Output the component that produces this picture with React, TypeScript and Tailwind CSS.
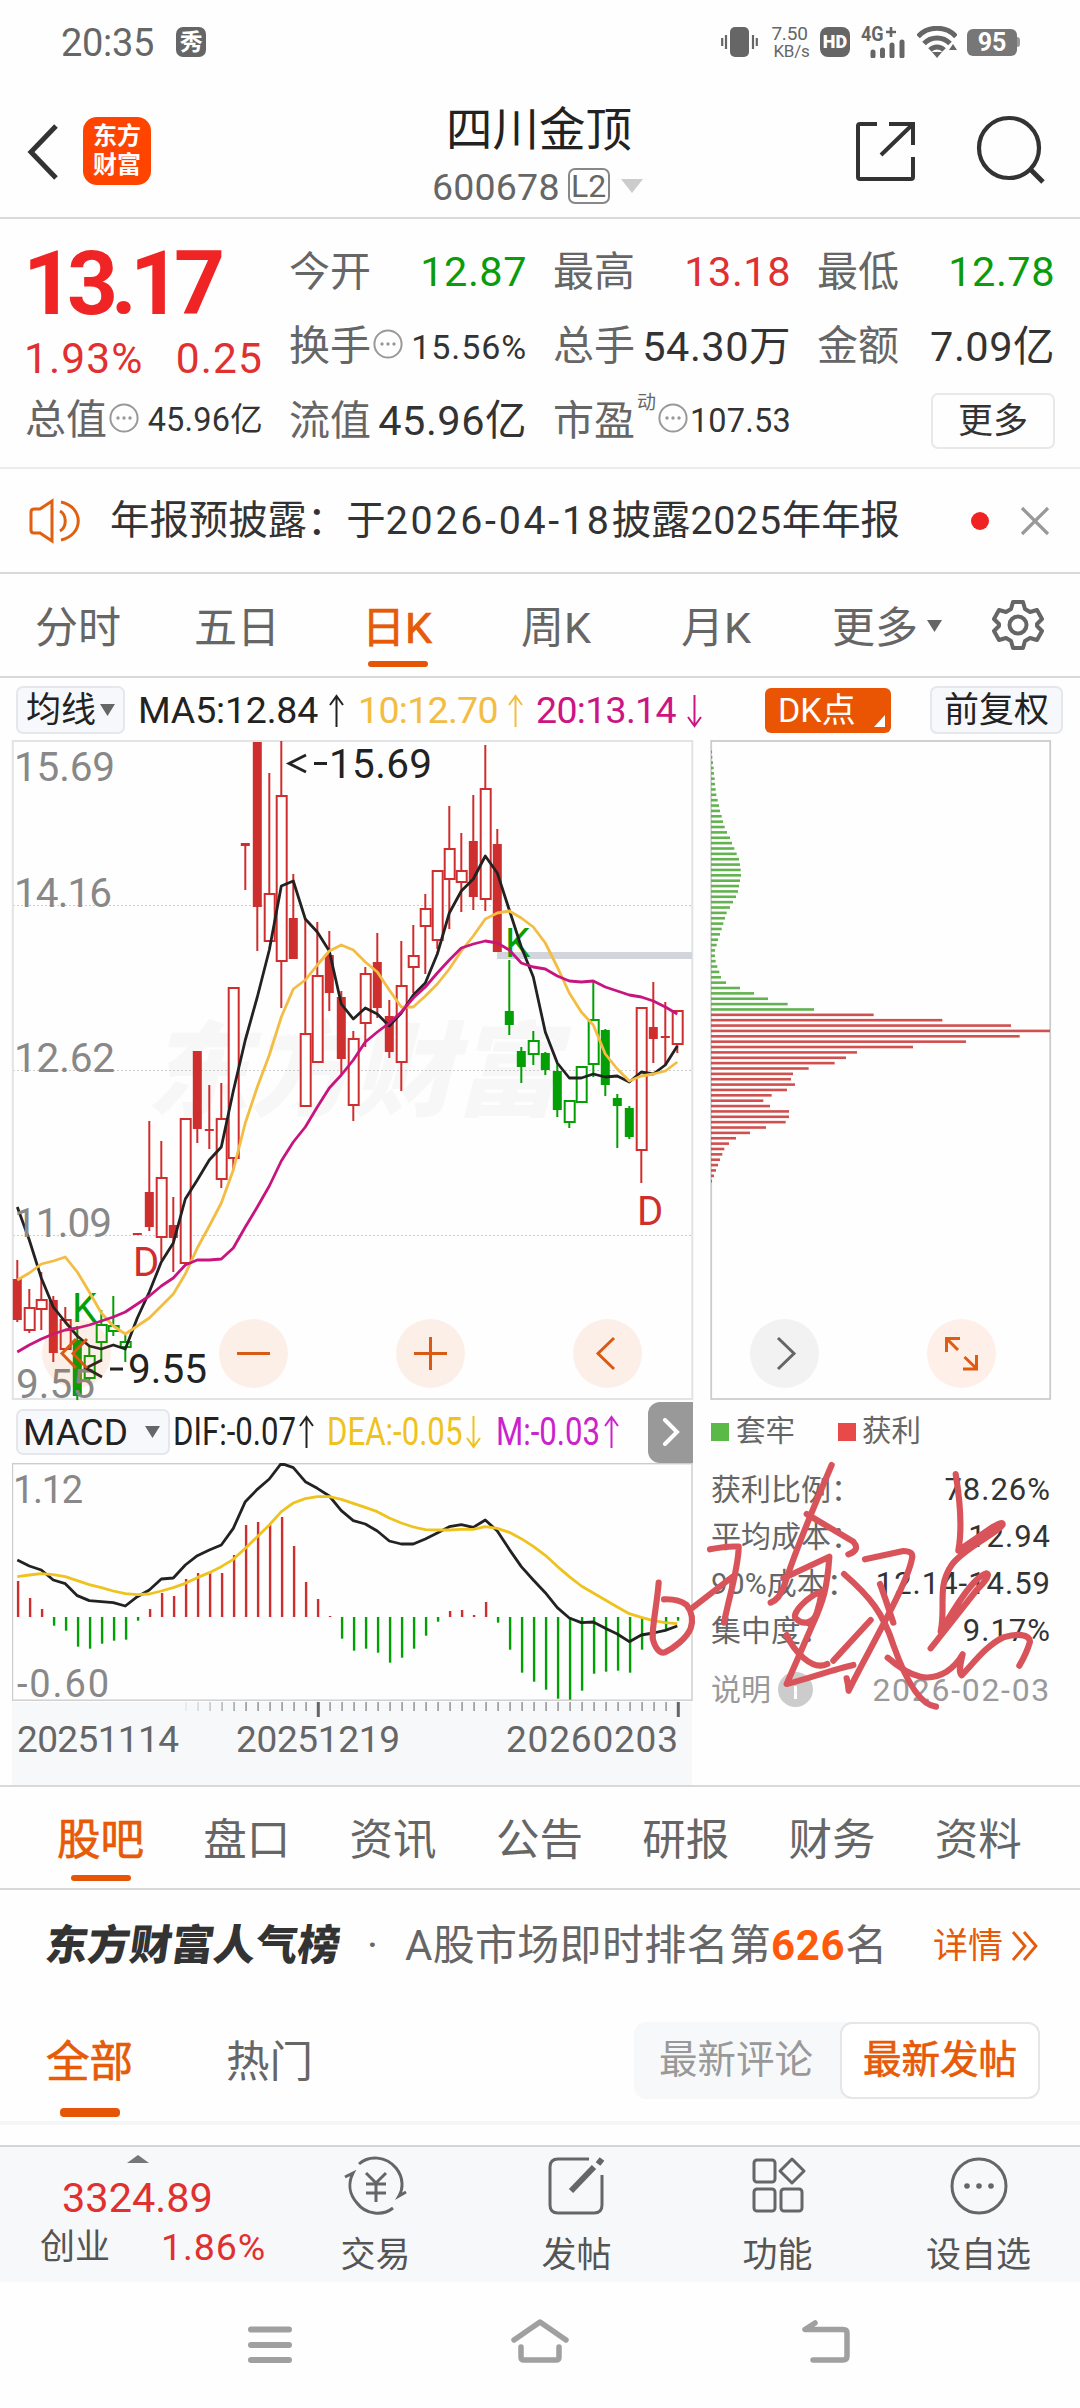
import React from "react";

type Kind = "R" | "r" | "G" | "g";
// [high, bodyTop, bodyBottom, low, kind]; upper case is a filled body, lower case a hollow one
type Candle = [number, number, number, number, Kind];

const RED = "#cf2e2e";
const GREEN = "#049f04";

const CANDLES: Candle[] = [
    [1260, 1279, 1320, 1322, "R"], [1289, 1308, 1330, 1333, "r"], [1272, 1300, 1309, 1330, "r"], [1296, 1300, 1353, 1362, "R"],
    [1307, 1320, 1349, 1351, "r"], [1326, 1340, 1396, 1400, "G"], [1347, 1356, 1378, 1380, "g"], [1310, 1325, 1342, 1360, "g"],
    [1296, 1326, 1331, 1336, "g"], [1335, 1342, 1347, 1362, "g"], [1233, 1233, 1235, 1235, "R"], [1121, 1192, 1227, 1231, "R"],
    [1141, 1178, 1237, 1260, "r"], [1197, 1225, 1238, 1272, "R"], [1119, 1119, 1263, 1263, "r"], [1051, 1051, 1129, 1143, "R"],
    [1085, 1129, 1131, 1149, "R"], [1083, 1119, 1179, 1188, "r"], [988, 988, 1158, 1170, "r"], [843, 843, 846, 890, "R"],
    [742, 742, 907, 951, "R"], [773, 894, 941, 941, "r"], [741, 796, 961, 1008, "r"], [874, 918, 959, 959, "R"],
    [918, 1034, 1106, 1106, "r"], [922, 976, 1062, 1062, "r"], [931, 955, 993, 1011, "R"], [991, 997, 1059, 1075, "R"],
    [1031, 1039, 1105, 1121, "r"], [967, 974, 1023, 1047, "r"], [933, 962, 1008, 1018, "R"], [1000, 1016, 1052, 1058, "R"],
    [941, 986, 1062, 1091, "r"], [925, 956, 967, 993, "r"], [894, 909, 926, 974, "r"], [871, 871, 940, 949, "r"],
    [806, 849, 879, 929, "r"], [833, 871, 882, 912, "r"], [795, 841, 897, 910, "R"], [745, 789, 899, 911, "r"],
    [829, 844, 952, 952, "R"], [960, 1011, 1025, 1035, "G"], [1047, 1051, 1067, 1083, "G"], [1031, 1041, 1054, 1065, "g"],
    [1052, 1053, 1070, 1075, "G"], [1063, 1071, 1110, 1117, "G"], [1101, 1101, 1122, 1128, "g"], [1067, 1067, 1102, 1102, "g"],
    [981, 1020, 1064, 1077, "g"], [1029, 1030, 1085, 1096, "G"], [1094, 1098, 1106, 1148, "G"], [1106, 1108, 1137, 1139, "G"],
    [1008, 1008, 1150, 1183, "r"], [982, 1027, 1039, 1063, "R"], [1002, 1036, 1038, 1065, "R"], [1011, 1011, 1044, 1053, "r"],
];

const MA5 = [1207, 1240, 1278, 1307, 1322, 1336, 1346, 1349, 1345, 1349, 1318, 1292, 1262, 1243, 1199, 1180, 1160, 1147, 1091, 1040, 997, 950, 886, 881, 919, 932, 951, 1004, 1019, 1008, 1014, 1026, 1013, 995, 983, 954, 913, 891, 879, 856, 873, 910, 947, 977, 1032, 1063, 1078, 1078, 1074, 1077, 1076, 1082, 1072, 1074, 1065, 1046];
const MA10 = [1280, 1273, 1264, 1261, 1257, 1272, 1292, 1313, 1326, 1334, 1326, 1318, 1306, 1294, 1274, 1248, 1226, 1203, 1170, 1123, 1087, 1055, 1017, 989, 980, 965, 951, 945, 950, 962, 972, 990, 1007, 1007, 996, 984, 969, 951, 936, 919, 913, 911, 918, 927, 943, 967, 993, 1012, 1025, 1054, 1069, 1081, 1076, 1074, 1071, 1062];
const MA20 = [1352, 1345, 1339, 1334, 1330, 1328, 1325, 1321, 1317, 1312, 1304, 1296, 1286, 1278, 1265, 1260, 1260, 1259, 1248, 1227, 1207, 1186, 1161, 1142, 1127, 1107, 1088, 1075, 1060, 1042, 1032, 1023, 1012, 998, 987, 973, 960, 948, 944, 941, 943, 950, 963, 967, 969, 976, 981, 982, 981, 987, 991, 995, 997, 1001, 1007, 1014];

const CHIPS = [3, 4, 6, 8, 9, 11, 12, 14, 16, 20, 24, 27, 32, 36, 41, 48, 57, 63, 70, 77, 84, 87, 89, 90, 87, 84, 81, 75, 66, 57, 47, 42, 37, 32, 27, 21, 17, 12, 12, 14, 19, 25, 30, 45, 87, 129, 171, 230, 309, 488, 694, 900, 1017, 926, 765, 606, 438, 405, 371, 293, 246, 240, 252, 228, 182, 157, 177, 234, 234, 224, 165, 117, 75, 54, 40, 34, 27, 21, 15, 9, 3];
const CHIPS_ABOVE = 49;

// MACD series are in thirds of a pixel below y = 1400
const BARS = [543, 594, 627, 677, 692, 740, 746, 731, 722, 719, 662, 627, 579, 588, 537, 519, 516, 519, 465, 375, 366, 375, 351, 438, 546, 597, 648, 716, 752, 746, 758, 788, 773, 746, 707, 665, 633, 630, 645, 606, 668, 749, 818, 845, 869, 896, 899, 872, 821, 815, 812, 818, 749, 718, 690, 662];
const DIF = [480, 498, 510, 540, 551, 587, 602, 605, 608, 618, 590, 570, 537, 534, 495, 467, 450, 435, 385, 305, 268, 237, 190, 203, 245, 265, 288, 332, 362, 372, 393, 423, 432, 432, 417, 399, 380, 374, 382, 360, 393, 448, 500, 540, 578, 623, 654, 668, 666, 685, 702, 725, 705, 699, 691, 678];
const DEA = [530, 525, 521, 524, 530, 542, 554, 563, 573, 581, 584, 582, 573, 563, 550, 533, 518, 500, 478, 445, 410, 375, 335, 309, 296, 290, 290, 298, 310, 322, 335, 354, 369, 381, 389, 390, 390, 388, 388, 380, 385, 397, 416, 439, 466, 499, 530, 558, 579, 600, 621, 641, 652, 662, 668, 671];

const px = (i: number) => 17.3 + i * 12;
const line = (ys: number[]) => ys.map((y, i) => `${px(i)},${y}`).join(" ");
const macdY = (v: number) => 1400 + v / 3;

const Dots: React.FC = () => (
    <svg width="30" height="30" viewBox="0 0 30 30" className="shrink-0 -mt-1.5">
        <circle cx="15" cy="15" r="13.6" fill="none" stroke="#999" strokeWidth="2" />
        {[9, 15, 21].map(x => <circle key={x} cx={x} cy="15" r="1.7" fill="#999" />)}
    </svg>
);

const Tri: React.FC<{ className?: string }> = ({ className = "" }) => (
    <svg width="15" height="12" viewBox="0 0 15 12" className={className}><path d="M0 0H15L7.5 12Z" fill="currentColor" /></svg>
);

const Arrow: React.FC<{ down?: boolean; className?: string }> = ({ down, className = "" }) => (
    <svg width="17" height="34" viewBox="0 0 17 34" className={`shrink-0 ${down ? "rotate-180" : ""} ${className}`}>
        <path d="M8.5 33V2M2 11L8.5 2L15 11" fill="none" stroke="currentColor" strokeWidth="2" />
    </svg>
);

const StatusBar: React.FC = () => (
    <div className="flex h-[84px] items-center pl-[61px] pr-[60px] text-[#666]">
        <span className="pt-[2px] text-[38px] tracking-[-0.3px]">20:35</span>
        <span className="ml-[22px] flex h-[30px] w-[30px] items-center justify-center rounded-[7px] bg-[#666] text-[23px] font-bold text-white">秀</span>
        <svg width="37" height="30" viewBox="0 0 37 30" className="ml-auto">
            <rect x="9" y="0" width="19" height="30" rx="5" fill="#666" />
            <path d="M1.2 11V19M5 8V22M32 8V22M35.8 11V19" stroke="#666" strokeWidth="2.2" />
        </svg>
        <div className="ml-[13px] w-[37px] text-center text-[19px] leading-[19px] tracking-[-0.2px]">
            <div>7.50</div>
            <div className="-mr-1 text-[17px] leading-[17px]">KB/s</div>
        </div>
        <span className="ml-[12px] flex h-[30px] w-[30px] items-center justify-center rounded-[8px] bg-[#666] text-[18px] font-black text-white">HD</span>
        <div className="relative ml-[11px] h-[32px] w-[46px]">
            <span className="block origin-left scale-x-90 text-[20px] font-bold leading-[16px]">4G</span>
            <svg width="46" height="32" viewBox="0 0 46 32" className="absolute inset-0">
                <path d="M25 6H35M30 1V11" stroke="#666" strokeWidth="2.6" />
                <path d="M12 26V30M21.5 24V30M31 19V30M41 16V30" stroke="#666" strokeWidth="5" strokeLinecap="round" />
            </svg>
        </div>
        <svg width="40" height="32" viewBox="0 0 40 32" className="ml-[10px]">
            <g fill="none" stroke="#666" strokeWidth="5">
                <path d="M1 10.5C11 -.5 29 -.5 39 10.5" />
                <path d="M7 17.5C14 10 26 10 33 17.5" />
                <path d="M13 24C17 20 23 20 27 24" />
            </g>
            <path d="M15 26H25L20 32Z M32 24L36 18L40 24Z" fill="#666" />
        </svg>
        <span className="ml-[10px] flex h-[27px] w-[50px] items-center justify-center rounded-[6px] bg-[#777] text-[25px] font-bold text-white">95</span>
        <span className="h-[10px] w-[3px] rounded-r bg-[#999]" />
    </div>
);

const Header: React.FC = () => (
    <div className="flex h-[135px] items-start border-b-2 border-[#d9d9d9] pl-[27px]">
        <svg width="32" height="56" viewBox="0 0 32 56" className="mt-[40px]"><path d="M29 2L4 28L29 54" fill="none" stroke="#333" strokeWidth="5" /></svg>
        <div className="ml-[24px] mt-[33px] flex h-[68px] w-[68px] flex-col items-center justify-center rounded-[14px] bg-[#ff4400] text-[24px] font-bold leading-[29px] text-white">
            <span>东方</span><span>财富</span>
        </div>
        <div className="ml-[225px] w-[330px] text-center">
            <div className="-ml-[4px] mt-[23px] text-[46.5px] text-[#222]">四川金顶</div>
            <div className="mt-[13px] flex items-center pl-[56px] text-[#666]">
                <span className="pt-[2px] text-[37.5px] tracking-[0.2px]">600678</span>
                <span className="ml-[8px] flex h-[36px] w-[42px] items-center justify-center rounded-[7px] border-2 border-[#888] text-[32px]">L2</span>
                <svg width="22" height="14" className="ml-[11px]"><path d="M0 0H22L11 14Z" fill="#ccc" /></svg>
            </div>
        </div>
        <svg width="62" height="62" viewBox="0 0 62 62" className="ml-[149px] mt-[36px]" fill="none" stroke="#333" strokeWidth="4">
            <path d="M22 4H5Q3 4 3 6V57Q3 59 5 59H56Q58 59 58 57V37M34 4H58V25M57 5L26 35" />
        </svg>
        <svg width="72" height="72" viewBox="0 0 72 72" className="ml-[57px] mt-[31px]" fill="none" stroke="#333" strokeWidth="4.200">
            <circle cx="35" cy="33" r="30" /><path d="M56 54L69 67" strokeWidth="5" />
        </svg>
    </div>
);

const SIZES = {
    normal: "text-[41.500px] tracking-[0.5px]",
    small: "text-[32.500px] tracking-[0.2px]",
    wide: "text-[34px] tracking-[0.9px]",
};

const Cell: React.FC<{ label: string; value: string; tone?: string; size?: keyof typeof SIZES; dots?: boolean; sup?: string }> = ({ label, value, tone = "text-[#333]", size = "normal", dots, sup }) => (
    <div className="flex h-[50px] items-center">
        <span className="text-[41px] text-[#666]">{label}</span>
        {sup && <span className="ml-[2px] -mt-[38px] text-[19px] text-[#666]">{sup}</span>}
        {dots && <span className="ml-[2px]"><Dots /></span>}
        <span className={`ml-auto whitespace-nowrap ${tone} ${SIZES[size]}`}>{value}</span>
    </div>
);

const Quote: React.FC = () => (
    <div className="grid h-[250px] grid-cols-[238px_238px_238px_238px] gap-x-[26px] border-b-2 border-[#ececec] pl-[25px]">
        <div className="flex flex-col pt-[25px]">
            <span className="-ml-[2px] text-[89px] font-bold leading-[80px] tracking-[-7px] text-[#f02424]">13.17</span>
            <span className="mt-[14px] flex justify-between text-[42.500px] tracking-[1.1px] text-[#e03030]"><span className="-ml-[1px]">1.93%</span><span>0.25</span></span>
            <div className="mt-[15px]"><Cell label="总值" value="45.96亿" size="small" dots /></div>
        </div>
        <div className="flex flex-col gap-[24.500px] pt-[28px]">
            <Cell label="今开" value="12.87" tone="text-[#0a9c0a]" />
            <Cell label="换手" value="15.56%" size="wide" dots />
            <Cell label="流值" value="45.96亿" />
        </div>
        <div className="flex flex-col gap-[24.500px] pt-[28px]">
            <Cell label="最高" value="13.18" tone="text-[#e03030]" />
            <Cell label="总手" value="54.30万" />
            <Cell label="市盈" value="107.53" size="small" dots sup="动" />
        </div>
        <div className="flex flex-col gap-[24.500px] pt-[28px]">
            <Cell label="最低" value="12.78" tone="text-[#0a9c0a]" />
            <Cell label="金额" value="7.09亿" />
            <div className="-mt-[3px] ml-auto flex h-[56px] w-[124px] items-center justify-center rounded-[7px] border-2 border-[#e8e8ec] text-[35px] text-[#333]">更多</div>
        </div>
    </div>
);

const Notice: React.FC = () => (
    <div className="flex h-[105px] items-center border-b-2 border-[#d9d9d9] pl-[29px]">
        <svg width="52" height="46" viewBox="0 0 52 46" fill="none" stroke="#e0600f" strokeWidth="3">
            <path d="M2 14Q2 11 5 11H11L23 3V43L11 35H5Q2 35 2 32Z" />
            <path d="M31 13C38 17 38 29 31 33M32 4C55 9 55 37 32 42" />
        </svg>
        <span className="ml-[29px] w-[861px] whitespace-nowrap pt-[1px] text-[39.400px] text-[#333]">
            年报预披露：于<span className="tracking-[2.700px]">2026-04-18</span>披露<span className="tracking-[0.700px]">2025</span>年年报
        </span>
        <span className="h-[18px] w-[18px] rounded-full bg-[#f02323]" />
        <svg width="30" height="30" viewBox="0 0 30 30" className="ml-[31px]"><path d="M2 2L28 28M28 2L2 28" stroke="#999" strokeWidth="3.200" /></svg>
    </div>
);

const Gear: React.FC = () => (
    <svg width="52" height="52" viewBox="0 0 52 52" fill="none" stroke="#666" strokeWidth="4" strokeLinejoin="round">
        <path d="M21 3H31L33 10L38 13L45 11L50 20L45 25V27L50 32L45 41L38 39L33 42L31 49H21L19 42L14 39L7 41L2 32L7 27V25L2 20L7 11L14 13L19 10Z" />
        <circle cx="26" cy="26" r="8.500" />
    </svg>
);

const PeriodTabs: React.FC = () => (
    <div className="flex h-[104px] items-center border-b-2 border-[#d9d9d9] pl-[35px] text-[43px] text-[#666]">
        <span className="w-[159px] pt-[7px]">分时</span>
        <span className="w-[168px] pt-[7px]">五日</span>
        <span className="relative w-[159px] pt-[7px] text-[#e65a08] [-webkit-text-stroke:0.7px]">
            日K
            <i className="absolute -bottom-[17px] left-[6px] h-[6px] w-[60px] rounded bg-[#e65505]" />
        </span>
        <span className="w-[160px] pt-[7px]">周K</span>
        <span className="w-[151px] pt-[7px]">月K</span>
        <span className="flex w-[160px] items-center pt-[7px]">更多<Tri className="-mt-[6px] ml-[9px]" /></span>
        <Gear />
    </div>
);

const MaRow: React.FC = () => (
    <div className="flex h-[64px] items-center pl-[16px] text-[37.500px]">
        <div className="flex h-[48px] w-[109px] items-center justify-center gap-[4px] rounded-[7px] border-2 border-[#e5e7ec] bg-[#f7f8fb] text-[35px] text-[#222]">均线<Tri className="text-[#666]" /></div>
        <span className="ml-[13px] flex w-[220px] items-center pt-[2px] text-[#222]"><span className="w-[190px] tracking-[-0.2px]">MA5:12.84</span><Arrow /></span>
        <span className="flex w-[178px] items-center pt-[2px] text-[#f3bd44]"><span className="w-[149px] tracking-[-0.7px]">10:12.70</span><Arrow /></span>
        <span className="flex items-center pt-[2px] text-[#cc1583]"><span className="w-[150px] tracking-[-0.7px]">20:13.14</span><Arrow down /></span>
        <div className="relative ml-[62px] flex h-[45px] w-[126px] items-center rounded-[6px] bg-[#ea5504] pl-[13px] text-[34px] text-white">
            DK点
            <svg width="11" height="12" className="absolute bottom-[6px] right-[6px]"><path d="M11 0V12H0Z" fill="#fff" /></svg>
        </div>
        <div className="ml-[39px] flex h-[48px] w-[133px] items-center justify-center rounded-[7px] border-2 border-[#e5e7ec] bg-[#f7f8fb] text-[35px] text-[#222]">前复权</div>
    </div>
);

const KChart: React.FC = () => (
    <svg width="682" height="662" viewBox="12 740 682 662" className="block shrink-0 overflow-visible">
        <text x="146" y="1108" fontSize="103" fontWeight="900" fontStyle="italic" fill="#f7f7f7">东方财富</text>
        <g stroke="#ccc" strokeWidth="1" strokeDasharray="2 2">
            <path d="M13 905.500H692M13 1070.500H692M13 1235.500H692" />
        </g>
        <rect x="12.800" y="741" width="679.500" height="658" fill="none" stroke="#e2e3e5" strokeWidth="2" />
        <rect x="497" y="952" width="195" height="7" fill="#d2d5dc" />
        {CANDLES.map(([hi, top, bot, lo, kind], i) => {
            const color = kind === "R" || kind === "r" ? RED : GREEN;
            const filled = kind === "R" || kind === "G";
            const x = px(i);
            return (
                <g key={i} stroke={color} strokeWidth="2">
                    {hi < top && <path d={`M${x} ${hi}V${top}`} />}
                    {lo > bot && <path d={`M${x} ${bot}V${lo}`} />}
                    {filled
                        ? <rect x={x - 4.5} y={top} width="9" height={bot - top} fill={color} stroke="none" />
                        : <rect x={x - 4.6} y={top} width="10" height={bot - top} fill="#fff" />}
                </g>
            );
        })}
        <g fontSize="40">
            <text x="72" y="1322" fill={GREEN}>K</text>
            <text x="505" y="957" fill={GREEN}>K</text>
            <text x="133" y="1276" fill={RED}>D</text>
            <text x="637" y="1225" fill={RED}>D</text>
        </g>
        <g fill="none" strokeWidth="2.800" strokeLinejoin="round">
            <polyline points={line(MA5)} stroke="#222" />
            <polyline points={line(MA10)} stroke="#f3bd44" />
            <polyline points={line(MA20)} stroke="#c7147f" />
        </g>
        <g fontSize="40.500" fill="#888">
            <text x="14" y="781" textLength="101">15.69</text>
            <text x="14" y="907" textLength="98">14.16</text>
            <text x="14" y="1072" textLength="101">12.62</text>
            <text x="14" y="1237" textLength="98">11.09</text>
            <text x="16" y="1398" textLength="79">9.55</text>
        </g>
        <g fill="none" stroke="#222" strokeWidth="2.800">
            <path d="M306 755L289 763.500L306 772M314 763.500H327" />
            <path d="M102 1360L86 1368L102 1377M110 1369H123" />
        </g>
        <g fontSize="40.500" fill="#222">
            <text x="329" y="778" textLength="103">15.69</text>
            <text x="128" y="1383" textLength="79">9.55</text>
        </g>
        <g fill="#ea5504" fillOpacity="0.09">
            {[76.5, 253.5, 430.5, 607.5].map(x => <circle key={x} cx={x} cy="1353.500" r="34.500" />)}
        </g>
        <g fill="none" stroke="#d95a12" strokeWidth="3">
            <path d="M76 1339L62 1353.500L76 1368M87 1339L73 1353.500L87 1368" />
            <path d="M237 1353.500H270M414 1353.500H447M430.500 1337V1370M614 1338L598 1353.500L614 1369" />
        </g>
    </svg>
);

const ChipChart: React.FC = () => (
    <svg width="342" height="662" viewBox="710 740 342 662" className="ml-[16px] block shrink-0">
        <rect x="711.200" y="741" width="339" height="658" fill="none" stroke="#ccc" strokeWidth="1.800" />
        {CHIPS.map((w, i) => (
            <rect key={i} x="711" y={750.6 + i * 5.366} width={w / 3} height="2.600" fill={i < CHIPS_ABOVE ? "#62b34f" : "#d05050"} />
        ))}
        <circle cx="784.500" cy="1353.500" r="34.500" fill="#f2f2f2" />
        <circle cx="961.500" cy="1353.500" r="34.500" fill="#fef0e8" />
        <path d="M778 1338L794 1353.500L778 1369" fill="none" stroke="#666" strokeWidth="3" />
        <path d="M960 1338.500H946.500V1352M947 1339L958 1350M964.500 1357L977 1369M963 1369H976.500V1355" fill="none" stroke="#e05a10" strokeWidth="3" />
    </svg>
);

const MacdRow: React.FC = () => (
    <div className="flex h-[62px] items-center pl-[4px] text-[38px]">
        <div className="flex h-[46px] w-[154px] shrink-0 items-center justify-between rounded-[7px] border-2 border-[#e5e7ec] bg-[#f7f8fb] pl-[5px] pr-[8px] text-[37px] text-[#222]">MACD<Tri className="text-[#666]" /></div>
        <span className="ml-[3px] flex w-[154px] shrink-0 items-center text-[#222]"><span className="w-[124px] origin-left scale-x-[0.82]">DIF:-0.07</span><Arrow className="ml-[1px]" /></span>
        <span className="flex w-[169px] shrink-0 items-center text-[#eec31e]"><span className="w-[137px] origin-left scale-x-[0.82]">DEA:-0.05</span><Arrow down className="ml-[1px]" /></span>
        <span className="flex w-[152px] shrink-0 items-center text-[#cc22cc]"><span className="w-[104px] origin-left scale-x-[0.82]">M:-0.03</span><Arrow className="ml-[3px]" /></span>
        <div className="flex h-[61px] w-[45px] shrink-0 items-center justify-center rounded-l-[12px] bg-[#999]">
            <svg width="18" height="28" viewBox="0 0 18 28"><path d="M3 2L15 14L3 26" fill="none" stroke="#fff" strokeWidth="4" strokeLinecap="round" /></svg>
        </div>
    </div>
);

const MacdChart: React.FC = () => (
    <svg width="682" height="322" viewBox="12 1463 682 322" className="block">
        <rect x="12" y="1702" width="680" height="83" fill="#f7f8fa" />
        <rect x="12.500" y="1463.700" width="679.500" height="236.500" fill="none" stroke="#ccc" strokeWidth="1.400" />
        {BARS.map((v, i) => {
            const y = macdY(v);
            return <rect key={i} x={px(i) - 0.4} y={Math.min(y, 1617)} width="2.400" height={Math.abs(y - 1617)} fill={y < 1617 ? RED : GREEN} />;
        })}
        <g fill="none" strokeWidth="2.800" strokeLinejoin="round">
            <polyline points={line(DIF.map(macdY))} stroke="#222" />
            <polyline points={line(DEA.map(macdY))} stroke="#eec31e" />
        </g>
        {BARS.map((_, i) => {
            if (i < 14) return null;
            const major = i === 25 || i === 55;
            return <rect key={i} x={px(i) - (major ? 0.5 : 0)} y="1702" width={major ? 3 : 1.6} height={major ? 15 : 9} fill={major ? "#666" : "#999"} opacity={Math.min(1, (i - 13) / 6)} />;
        })}
        <g fill="#888" fontSize="38">
            <text x="13" y="1503" textLength="70">1.12</text>
            <text x="17" y="1697" textLength="92">-0.60</text>
        </g>
        <g fill="#666" fontSize="37">
            <text x="17" y="1752" textLength="162">20251114</text>
            <text x="236" y="1752" textLength="164">20251219</text>
            <text x="506" y="1752" textLength="172">20260203</text>
        </g>
    </svg>
);

const ChipRow: React.FC<{ label: string; value: string }> = ({ label, value }) => (
    <div className="flex h-[47px] items-center justify-between whitespace-nowrap text-[30px]">
        <span className="text-[#666]">{label}</span>
        <span className="text-[31px] tracking-[1px] text-[#333]">{value}</span>
    </div>
);

const ChipInfo: React.FC = () => (
    <div className="w-[340px]">
        <div className="flex h-[61px] items-center text-[29.500px] text-[#666]">
            <i className="h-[18px] w-[18px] bg-[#5bba47]" /><span className="ml-[7px] w-[102px]">套牢</span>
            <i className="h-[18px] w-[18px] bg-[#e84a4a]" /><span className="ml-[6px]">获利</span>
        </div>
        <div className="pt-[4px]">
            <ChipRow label="获利比例：" value="78.26%" />
            <ChipRow label="平均成本：" value="12.94" />
            <ChipRow label="90%成本：" value="12.14-14.59" />
            <ChipRow label="集中度：" value="9.17%" />
            <div className="mt-[12px] flex h-[47px] items-center text-[30px] text-[#999]">
                说明
                <svg width="35" height="35" viewBox="0 0 35 35" className="ml-[7px]">
                    <circle cx="17.500" cy="17.500" r="17.500" fill="#ccc" />
                    <path d="M17.500 14V27M17.500 8V11" stroke="#fff" strokeWidth="3" />
                </svg>
                <span className="ml-auto text-[32px] tracking-[1.700px]">2026-02-03</span>
            </div>
        </div>
    </div>
);

// freehand marker strokes over the lower right of the charts
const Scribble: React.FC = () => (
    <svg width="460" height="380" viewBox="0 0 1380 1140" className="pointer-events-none absolute left-[620px] top-[1400px]" fill="none" stroke="#d9545a" strokeWidth="18.5" strokeLinecap="round" strokeLinejoin="round">
        <path d="M116 548C110 620 96 680 98 715C105 745 120 762 135 757C160 745 200 715 212 685C222 655 215 635 200 615C180 600 155 597 132 598" />
        <path d="M215 625L335 532M270 448C300 442 330 438 356 440C356 500 330 580 312 668" />
        <path d="M635 195C590 300 530 440 495 550C480 590 470 600 452 608" />
        <path d="M560 342L700 425Q722 450 685 463" />
        <path d="M490 535L628 470C622 560 612 600 575 680L500 852C560 838 640 808 700 795" />
        <path d="M605 575C560 590 515 640 527 655C550 678 580 668 590 640Q600 610 605 575" />
        <path d="M500 705C520 750 575 815 622 792M640 782L752 660" />
        <path d="M735 478L850 453Q882 453 876 475C860 560 740 760 686 872Q684 850 680 835" />
        <path d="M672 522C750 590 790 640 820 735C850 820 895 915 948 920M780 552C795 590 810 640 820 668" />
        <path d="M1007 222C1020 300 1028 380 1015 452L1120 380Q1150 362 1148 374C1140 395 1030 445 995 495C950 560 978 620 962 695C1000 630 1060 530 1100 520Q1115 525 1070 570L932 745" />
        <path d="M803 773C880 840 930 845 980 815Q1010 795 1028 763C1022 790 1014 815 1025 826C1060 790 1100 735 1150 712C1190 700 1228 702 1230 725Q1220 760 1198 797" />
    </svg>
);

const INFO_TABS = ["股吧", "盘口", "资讯", "公告", "研报", "财务", "资料"];

const Community: React.FC = () => (
    <>
        <div className="flex h-[105px] items-center border-y-2 border-[#d9d9d9] pl-[57px] text-[43.500px] text-[#666]">
            {INFO_TABS.map((t, i) => (
                <span key={t} className={`relative w-[146.300px] shrink-0 pt-[7px] ${i === 0 ? "text-[#e65a08] [-webkit-text-stroke:0.7px]" : ""}`}>
                    {t}
                    {i === 0 && <i className="absolute -bottom-[18px] left-[14px] h-[6px] w-[60px] rounded bg-[#e65505]" />}
                </span>
            ))}
        </div>
        <div className="flex h-[112px] items-center whitespace-nowrap pl-[46px] text-[42px] text-[#666]">
            <span className="w-[294px] skew-x-[-8deg] font-black text-[#333]">东方财富人气榜</span>
            <span className="w-[65px] text-center">·</span>
            <span className="w-[528px] tracking-[0.300px]">A股市场即时排名第<b className="tracking-[0.600px] text-[#ff5a0a]">626</b>名</span>
            <span className="text-[35px] text-[#e65a08]">详情</span>
            <svg width="28" height="32" viewBox="0 0 28 32" className="ml-[8px]" fill="none" stroke="#e65a08" strokeWidth="2.800"><path d="M2 2L14 16L2 30M13 2L25 16L13 30" /></svg>
        </div>
        <div className="flex h-[123px] items-center border-b-4 border-[#f5f6f8] pl-[46px] text-[43.500px] text-[#666]">
            <span className="relative w-[180px] pt-[3px] text-[#e65a08] [-webkit-text-stroke:0.7px]">全部<i className="absolute -bottom-[32px] left-[14px] h-[9px] w-[60px] rounded-[4px] bg-[#e65505]" /></span>
            <span className="w-[408px] pt-[3px]">热门</span>
            <div className="-mt-[2px] flex h-[77px] w-[406px] items-center rounded-[12px] bg-[#f7f8fa] text-[38.500px]">
                <span className="w-[206px] pl-[25px] text-[#999]">最新评论</span>
                <span className="flex h-full w-[200px] items-center justify-center rounded-[12px] border-2 border-[#e6e6e8] bg-white text-[#e65a08] [-webkit-text-stroke:0.7px]">最新发帖</span>
            </div>
        </div>
    </>
);

const BottomItem: React.FC<{ label: string; children: React.ReactNode }> = ({ label, children }) => (
    <div className="flex w-[201px] flex-col items-center pt-[8px] text-[35px] text-[#555]">
        <svg width="66" height="62" viewBox="0 0 66 62" fill="none" stroke="#666" strokeWidth="3">{children}</svg>
        <span className="mt-[21px] whitespace-nowrap">{label}</span>
    </div>
);

const BottomBar: React.FC = () => (
    <div className="mt-[20px] flex h-[137px] border-t-2 border-[#d3d5d9] bg-[#f7f8fa]">
        <div className="flex w-[275px] flex-col items-center pt-[8px]">
            <svg width="22" height="8"><path d="M11 0L22 8H0Z" fill="#777" /></svg>
            <span className="mt-[14px] text-[41.500px] text-[#e03030]">3324.89</span>
            <div className="mt-[10px] flex items-center gap-[51px] pl-[31px]">
                <span className="text-[35px] text-[#555]">创业</span>
                <span className="text-[37.500px] tracking-[0.900px] text-[#e03030]">1.86%</span>
            </div>
        </div>
        <BottomItem label="交易">
            <path d="M16 9C26 0 43 1 53 13C61 23 60 34 56 41L63 37M50 53C40 61 23 60 14 48C6 39 5 28 10 18L2 22" />
            <path d="M23 18L33 28L43 18M23 29H43M23 38H43M33 28V47" />
        </BottomItem>
        <BottomItem label="发帖">
            <path d="M45 4H14Q6 4 6 12V50Q6 58 14 58H50Q58 58 58 50V20" />
            <path d="M27 36L50 12" strokeWidth="6" /><path d="M54 9L58 4" strokeWidth="6" />
        </BottomItem>
        <BottomItem label="功能">
            <rect x="9" y="5" width="21" height="22" rx="3" />
            <rect x="9" y="34" width="21" height="22" rx="3" />
            <rect x="36" y="34" width="21" height="22" rx="3" />
            <path d="M47 4L59 16L47 28L35 16Z" strokeLinejoin="round" />
        </BottomItem>
        <BottomItem label="设自选">
            <circle cx="33" cy="31" r="27" />
            {[21, 33, 45].map(x => <circle key={x} cx={x} cy="31" r="1.800" fill="#666" strokeWidth="2" />)}
        </BottomItem>
    </div>
);

const NavBar: React.FC = () => (
    <div className="flex h-[126px] items-start pl-[247px] pt-[36px]">
        <svg width="46" height="50" viewBox="0 0 46 50" stroke="#a0a0a0" strokeWidth="6" strokeLinecap="round"><path d="M4 11.500H42M4 27H42M4 42H42" /></svg>
        <svg width="62" height="50" viewBox="0 0 62 50" className="ml-[216px]" fill="none" stroke="#a0a0a0" strokeWidth="5.500" strokeLinecap="round" strokeLinejoin="round">
            <path d="M5 22L31 4L57 22M12 29V39Q12 42 15 42H47Q50 42 50 39V29" />
        </svg>
        <svg width="54" height="50" viewBox="0 0 54 50" className="ml-[227px]" fill="none" stroke="#a0a0a0" strokeWidth="5.500" strokeLinecap="round" strokeLinejoin="round">
            <path d="M17 5L7 11.500H45Q49 11.500 49 15V38Q49 42 45 42H15" />
        </svg>
    </div>
);

const App: React.FC = () => (
    <div className="relative h-[2408px] w-[1080px] overflow-hidden bg-[#fefefe] font-[Roboto,'Noto_Sans_CJK_SC',sans-serif] leading-none">
        <StatusBar />
        <Header />
        <Quote />
        <Notice />
        <PeriodTabs />
        <MaRow />
        <div className="-mt-[2px] flex h-[661px] pl-[12px]">
            <KChart />
            <ChipChart />
        </div>
        <div className="flex h-[384px] pl-[12px]">
            <div className="w-[699px]">
                <MacdRow />
                <MacdChart />
            </div>
            <ChipInfo />
        </div>
        <Community />
        <BottomBar />
        <NavBar />
        <Scribble />
    </div>
);

export default App;
